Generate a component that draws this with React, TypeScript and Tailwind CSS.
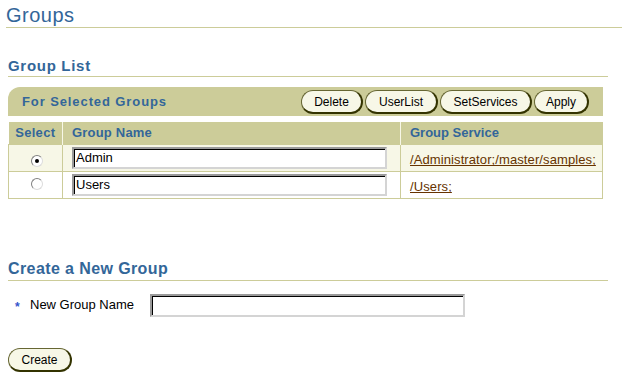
import React from 'react';

const Btn = ({ label, className = '' }: { label: string; className?: string }) => (
  <button
    className={`h-[24px] rounded-full bg-[#f7f7e7] border border-[#666633] border-r-2 border-b-2 border-r-[#333300] border-b-[#333300] text-[12px] text-black leading-none ${className}`}
  >
    {label}
  </button>
);

const Radio = ({ checked }: { checked?: boolean }) => (
  <span className="inline-flex w-[12px] h-[12px] rounded-full bg-white border border-t-[#808080] border-l-[#808080] border-b-[#dcdcdc] border-r-[#dcdcdc] items-center justify-center">
    {checked && <span className="w-[4px] h-[4px] rounded-full bg-black" />}
  </span>
);

const TextBox = ({ value, className = '' }: { value?: string; className?: string }) => (
  <div
    className={`bg-white border-2 border-t-[#9a9a9a] border-l-[#9a9a9a] border-b-[#d4d4d4] border-r-[#d4d4d4] shadow-[inset_1px_1px_0_#000] flex items-center pl-[2px] text-[13px] text-black ${className}`}
  >
    {value}
  </div>
);

const groups = [
  { name: 'Admin', service: '/Administrator;/master/samples;', checked: true },
  { name: 'Users', service: '/Users;', checked: false },
];

export default function App() {
  return (
    <div className="w-[622px] h-[381px] bg-white overflow-hidden font-['Liberation_Sans',Arial,sans-serif]">
      <div className="ml-[6px] pt-[5px] pb-[2px] border-b border-[#cccc99]">
        <h1 className="text-[20px] leading-[20px] text-[#336699] tracking-[0.5px]">Groups</h1>
      </div>

      <div className="mx-[8px] mr-[14px] mt-[30px] pb-[3px] border-b border-[#cccc99]">
        <h2 className="text-[15px] leading-[15px] font-bold text-[#336699] tracking-[0.7px]">Group List</h2>
      </div>

      <div className="ml-[8px] w-[595px] mt-[10px] h-[29px] bg-[#cccc99] rounded-tl-[12px] flex items-center justify-between pl-[14px] pr-[14px]">
        <span className="text-[13px] font-bold text-[#336699] tracking-[0.9px]">For Selected Groups</span>
        <div className="flex gap-[2px] pt-[1px]">
          <Btn label="Delete" className="w-[62px]" />
          <Btn label="UserList" className="w-[73px]" />
          <Btn label="SetServices" className="w-[92px]" />
          <Btn label="Apply" className="w-[55px]" />
        </div>
      </div>

      <table className="ml-[8px] mt-[6px] w-[595px] border-collapse text-[13px]">
        <thead>
          <tr className="h-[22px] bg-[#cccc99] text-[#336699] font-bold">
            <th className="w-[54px] text-center border-r border-[#f7f7e7] tracking-[0.3px]">Select</th>
            <th className="w-[338px] text-left pl-[9px] border-r border-[#f7f7e7] tracking-[0.2px]">Group Name</th>
            <th className="text-left pl-[9px]">Group Service</th>
          </tr>
        </thead>
        <tbody>
          {groups.map((g, i) => (
            <tr key={g.name} className={`h-[27px] ${i === 0 ? 'bg-[#f7f7e7]' : 'bg-white'}`}>
              <td className="border border-[#cccc99] text-center align-middle pt-[2px] pl-[3px]">
                <Radio checked={g.checked} />
              </td>
              <td className="border border-[#cccc99] pl-[9px] align-middle">
                <TextBox value={g.name} className="w-[315px] h-[22px]" />
              </td>
              <td className="border border-[#cccc99] pl-[9px] align-middle pt-[4px]">
                <a className="text-[#663300] underline [text-decoration-skip-ink:none] text-[13px] tracking-[0.1px]">{g.service}</a>
              </td>
            </tr>
          ))}
        </tbody>
      </table>

      <div className="mx-[8px] mr-[14px] mt-[62px] pb-[3px] border-b border-[#cccc99]">
        <h2 className="text-[16px] leading-[16px] font-bold text-[#336699] tracking-[0.4px]">Create a New Group</h2>
      </div>

      <div className="flex items-center mt-[13px] ml-[15px]">
        <span className="text-[#3355cc] text-[12px] font-bold w-[15px] pt-[4px]">*</span>
        <span className="text-[13px] text-black w-[120px]">New Group Name</span>
        <TextBox className="w-[315px] h-[23px]" />
      </div>

      <div className="ml-[8px] mt-[30px]">
        <Btn label="Create" className="w-[64px]" />
      </div>
    </div>
  );
}
